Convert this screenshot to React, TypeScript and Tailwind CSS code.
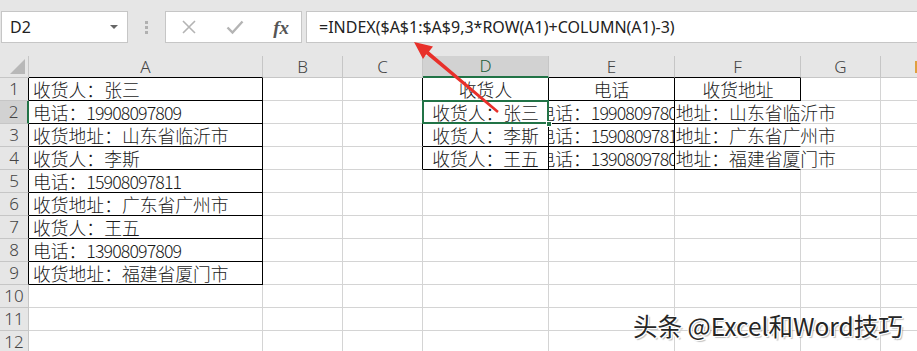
import React from "react"

const cjk = { fontFamily: '"Noto Sans CJK SC", "Noto Sans", sans-serif' }

const cols = [
  { key: "A", w: "w-[234px]" },
  { key: "B", w: "w-[80px]" },
  { key: "C", w: "w-[80px]" },
  { key: "D", w: "w-[126px]" },
  { key: "E", w: "w-[126px]" },
  { key: "F", w: "w-[126px]" },
  { key: "G", w: "w-[80px]" },
]

type Cell = { label: string; num?: string }

const colA: Cell[] = [
  { label: "收货人：张三" },
  { label: "电话：", num: "19908097809" },
  { label: "收货地址：山东省临沂市" },
  { label: "收货人：李斯" },
  { label: "电话：", num: "15908097811" },
  { label: "收货地址：广东省广州市" },
  { label: "收货人：王五" },
  { label: "电话：", num: "13908097809" },
  { label: "收货地址：福建省厦门市" },
]

// result table D1:F4, filled by the INDEX formula
const table: Cell[][] = [
  [{ label: "收货人" }, { label: "电话" }, { label: "收货地址" }],
  [colA[0], colA[1], colA[2]],
  [colA[3], colA[4], colA[5]],
  [colA[6], colA[7], colA[8]],
]

function Text({ cell }: { cell: Cell }) {
  return (
    <span className="whitespace-nowrap">
      {cell.label}
      {cell.num && <span className="tracking-[-0.9px]">{cell.num}</span>}
    </span>
  )
}

const grid = "border-[#d4d4d4]"
const black = "border-black"

function XIcon() {
  return (
    <svg width="16" height="16" viewBox="0 0 16 16">
      <path d="M2 2 L14 14 M14 2 L2 14" stroke="#b4b4b4" strokeWidth="1.6" fill="none" />
    </svg>
  )
}

function CheckIcon() {
  return (
    <svg width="18" height="16" viewBox="0 0 18 16">
      <path d="M1.5 8.5 L6.5 13.5 L16.5 2.5" stroke="#b4b4b4" strokeWidth="2.4" fill="none" />
    </svg>
  )
}

function Arrow() {
  return (
    <svg
      className="absolute left-0 top-0 pointer-events-none z-30"
      width="917"
      height="351"
      viewBox="0 0 917 351"
    >
      <polygon
        points="414,42 433,46.5 429,51.5 498.8,111 497.2,112.9 426.2,54.2 423,59"
        fill="#e8302a"
      />
    </svg>
  )
}

export default function App() {
  const rows = Array.from({ length: 12 }, (_, i) => i + 1)

  return (
    <div className="relative w-[917px] h-[351px] overflow-hidden bg-white" style={cjk}>
      {/* formula bar */}
      <div className="h-[56px] bg-[#e6e6e6] flex items-start pt-[11px]">
        <div className="ml-[1px] w-[127px] h-[32px] bg-white border border-[#c6c6c6] flex items-center justify-between pl-[8px] pr-[9px]">
          <span className="text-[16px] text-[#222]" style={{ fontFamily: '"Noto Sans", sans-serif' }}>
            D2
          </span>
          <span className="w-0 h-0 border-l-[4px] border-r-[4px] border-t-[4px] border-l-transparent border-r-transparent border-t-[#666]" />
        </div>
        <div className="w-[37px] h-[32px] flex flex-col items-center justify-center gap-[2px]">
          <span className="w-[3px] h-[3px] bg-[#b0b0b0]" />
          <span className="w-[3px] h-[3px] bg-[#b0b0b0]" />
          <span className="w-[3px] h-[3px] bg-[#b0b0b0]" />
        </div>
        <div className="w-[137px] h-[32px] bg-white border border-[#c6c6c6] flex items-center pl-[15px] pr-[12px] justify-between">
          <XIcon />
          <CheckIcon />
          <span
            className="text-[19px] italic font-bold text-[#555] leading-none"
            style={{ fontFamily: '"Liberation Serif", serif' }}
          >
            fx
          </span>
        </div>
        <div className="ml-[4px] flex-1 h-[32px] bg-white border border-[#c6c6c6] border-r-0 flex items-center pl-[12px]">
          <span className="text-[16px] text-[#222]" style={{ fontFamily: '"Noto Sans", sans-serif' }}>
            =INDEX($A$1:$A$9,3*ROW(A1)+COLUMN(A1)-3)
          </span>
        </div>
      </div>

      {/* column headers */}
      <div className="flex h-[22px] bg-[#e6e6e6] text-[#444]" style={{ fontFamily: '"Noto Sans", sans-serif' }}>
        <div className="w-[29px] border-r border-b border-[#c6c6c6] relative">
          <svg className="absolute right-[3px] bottom-[3px]" width="15" height="15" viewBox="0 0 15 15">
            <polygon points="15,0 15,15 0,15" fill="#b8b8b8" />
          </svg>
        </div>
        {cols.map((c) => {
          const sel = c.key === "D"
          const blackBottom = c.key === "A" || c.key === "E" || c.key === "F"
          return (
            <div
              key={c.key}
              className={`${c.w} border-r border-[#c6c6c6] flex items-center justify-center text-[17px] font-light ${
                sel
                  ? "bg-[#d2d2d2] text-[#1e5e3a] border-b-2 border-b-[#217346]"
                  : blackBottom
                  ? "border-b border-b-black"
                  : "border-b"
              }`}
            >
              {c.key}
            </div>
          )
        })}
        <div className="flex-1 border-b border-[#c6c6c6] flex justify-end">
          <span className="w-[2px] h-[12px] mt-[5px] bg-[#e0a040]" />
        </div>
      </div>

      {/* rows */}
      {rows.map((r) => {
        const inA = r <= 9
        const inTable = r <= 4
        const t = inTable ? table[r - 1] : null
        const selRow = r === 2
        return (
          <div key={r} className="flex h-[23px] font-light text-[#1a1a1a]">
            <div
              className={`w-[29px] border-b border-[#c6c6c6] flex items-center justify-center text-[17px] text-[#444] ${
                selRow
                  ? "bg-[#d2d2d2] border-r-2 border-r-[#217346]"
                  : inA
                  ? "bg-[#e6e6e6] border-r border-r-black"
                  : "bg-[#e6e6e6] border-r border-r-[#c6c6c6]"
              }`}
              style={{ fontFamily: '"Noto Sans", sans-serif' }}
            >
              {r}
            </div>

            {/* A */}
            <div
              className={`w-[234px] border-r border-b ${inA ? black : grid} flex items-center pl-[4px] text-[17.8px] overflow-hidden`}
            >
              {inA && <Text cell={colA[r - 1]} />}
            </div>

            {/* B */}
            <div className={`w-[80px] border-r border-b ${grid}`} />

            {/* C */}
            <div className={`w-[80px] border-b ${grid} border-r ${inTable ? "border-r-black" : ""}`} />

            {/* D */}
            <div
              className={`relative w-[126px] border-r border-b ${inTable ? black : grid} flex items-center justify-center text-[17.8px]`}
            >
              {t && <Text cell={t[0]} />}
              {r === 2 && (
                <>
                  <div className="absolute left-[-1px] top-[-1px] right-[-1px] bottom-[-1px] border-2 border-[#217346] z-10" />
                  <div className="absolute right-[-4px] bottom-[-4px] w-[6px] h-[6px] bg-[#217346] border border-white z-20" />
                </>
              )}
            </div>

            {/* E */}
            <div
              className={`w-[126px] border-r border-b ${inTable ? black : grid} flex items-center justify-center text-[17.8px] overflow-hidden`}
            >
              {t && <Text cell={t[1]} />}
            </div>

            {/* F: text spills over G when G is empty */}
            <div
              className={`relative w-[126px] border-b ${inTable ? black : grid} border-r ${
                r === 1 ? "border-r-black" : inTable ? "border-r-transparent" : ""
              } text-[17.8px]`}
            >
              {t && (
                <div className="absolute left-0 top-0 h-full w-[206px] overflow-hidden z-10">
                  <div className="w-[126px] h-full flex items-center justify-center">
                    <Text cell={t[2]} />
                  </div>
                </div>
              )}
            </div>

            {/* G */}
            <div className={`w-[80px] border-r border-b ${grid}`} />
            <div className={`flex-1 border-b ${grid}`} />
          </div>
        )
      })}

      <Arrow />

      <div
        className="absolute left-[633px] top-[308px] text-[24.5px] text-[#262626] whitespace-nowrap z-30"
        style={{
          ...cjk,
          textShadow: "1px 1px 0 #fff, -1px -1px 0 #fff, 1px -1px 0 #fff, -1px 1px 0 #fff, 2px 2px 1px rgba(0,0,0,0.25)",
        }}
      >
        头条 @Excel和Word技巧
      </div>
    </div>
  )
}
